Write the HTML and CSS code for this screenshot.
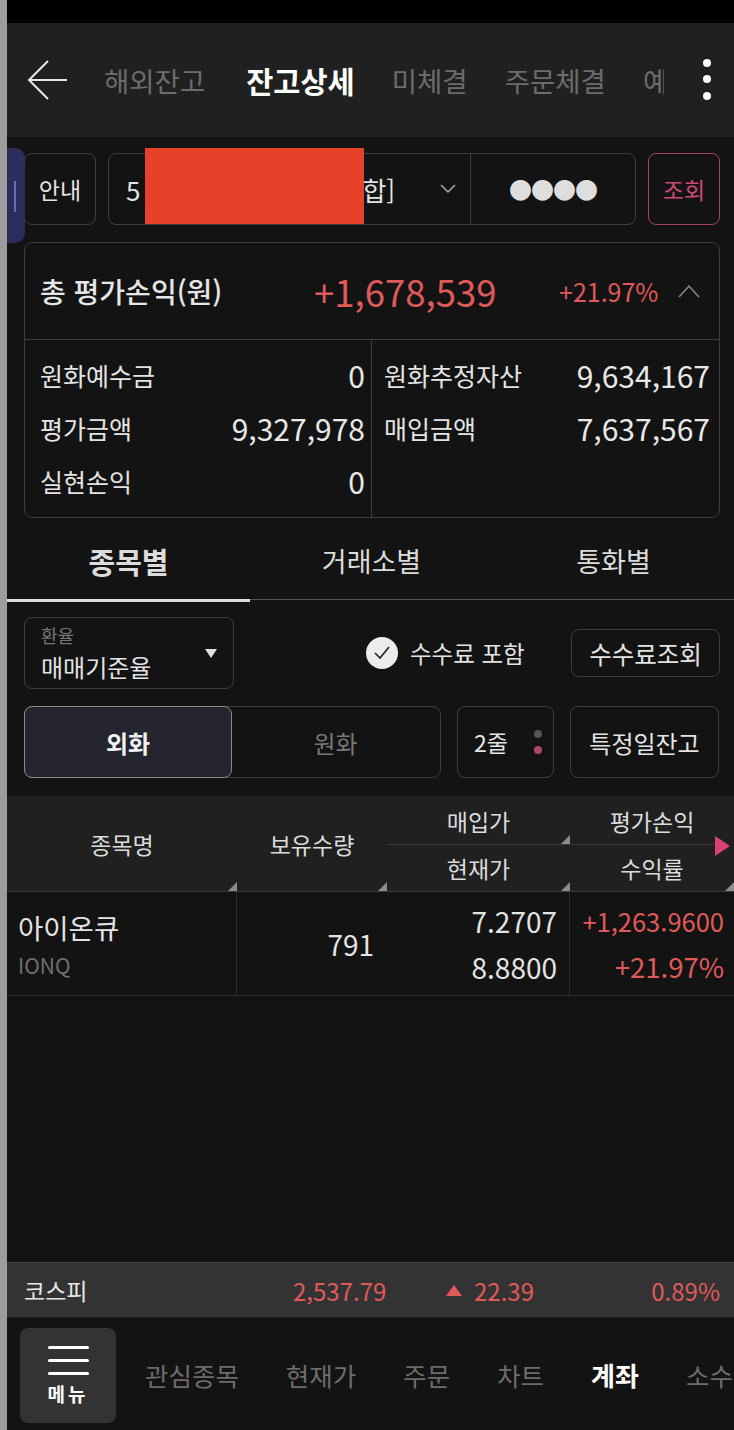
FILE: index.html
```html
<!DOCTYPE html>
<html lang="ko">
<head>
  <meta charset="UTF-8" />
  <title>잔고상세</title>
  <link rel="stylesheet" href="styles.css">
</head>
<body>
  <div class="app">
    <div class="status"></div>
    <header class="topbar">
      <svg class="back" width="42" height="42" viewBox="0 0 42 42">
        <path d="M40 21 H2 M21 2 L2 21 L21 40" fill="none" stroke="#e8e8e8" stroke-width="2"/>
      </svg>
      <nav class="top-tabs">
        <span>해외잔고</span>
        <span class="on">잔고상세</span>
        <span>미체결</span>
        <span>주문체결</span>
        <span>예약주문</span>
      </nav>
      <svg class="kebab" width="10" height="44" viewBox="0 0 10 44">
        <circle cx="5" cy="5" r="4" fill="#fff"/>
        <circle cx="5" cy="21" r="4" fill="#fff"/>
        <circle cx="5" cy="38" r="4" fill="#fff"/>
      </svg>
    </header>

    <main class="content">
      <div class="side-tab"><i></i></div>

      <div class="account-row">
        <button class="box-btn guide">안내</button>
        <div class="account">
          <div class="acct-no">
            <span>5</span>
            <span class="acct-type">합]</span>
            <svg class="chev" width="16" height="10" viewBox="0 0 16 10">
              <path d="M1 1 L8 8 L15 1" fill="none" stroke="#aaa" stroke-width="1.5"/>
            </svg>
            <div class="redact"></div>
          </div>
          <div class="acct-pw">●●●●</div>
        </div>
        <button class="box-btn query">조회</button>
      </div>

      <section class="summary">
        <div class="summary-head">
          <span class="sum-title">총 평가손익(원)</span>
          <span class="sum-total">+1,678,539</span>
          <span class="sum-rate">+21.97%</span>
          <svg class="caret" width="22" height="14" viewBox="0 0 22 14">
            <path d="M1 13 L11 2 L21 13" fill="none" stroke="#8a8a8a" stroke-width="1.5"/>
          </svg>
        </div>
        <div class="summary-grid">
          <div class="sum-col">
            <div class="sum-row"><span>원화예수금</span><b>0</b></div>
            <div class="sum-row"><span>평가금액</span><b>9,327,978</b></div>
            <div class="sum-row"><span>실현손익</span><b>0</b></div>
          </div>
          <div class="sum-col right">
            <div class="sum-row"><span>원화추정자산</span><b>9,634,167</b></div>
            <div class="sum-row"><span>매입금액</span><b>7,637,567</b></div>
          </div>
        </div>
      </section>

      <div class="tabs">
        <span class="on">종목별</span>
        <span>거래소별</span>
        <span>통화별</span>
      </div>

      <div class="ctrl-row">
        <div class="rate-select">
          <small>환율</small>
          <span>매매기준율</span>
          <i class="tri"></i>
        </div>
        <label class="fee-check">
          <svg width="34" height="34" viewBox="0 0 34 34">
            <circle cx="17" cy="17" r="16" fill="#ececec"/>
            <path d="M10 17 L15 22 L24 11" fill="none" stroke="#222" stroke-width="1.6"/>
          </svg>
          수수료 포함
        </label>
        <button class="box-btn fee-btn">수수료조회</button>
      </div>

      <div class="ctrl-row second">
        <div class="segment">
          <span class="on">외화</span>
          <span>원화</span>
        </div>
        <div class="lines-btn">
          2줄
          <span class="dots"><i></i><i class="pink"></i></span>
        </div>
        <button class="box-btn date-btn">특정일잔고</button>
      </div>

      <div class="table">
        <div class="thead">
          <div class="th c1">종목명<i class="corner"></i></div>
          <div class="th c2">보유수량<i class="corner"></i></div>
          <div class="th c3 split">
            <div class="half">매입가<i class="corner"></i></div>
            <div class="half">현재가<i class="corner"></i></div>
          </div>
          <div class="th c4 split">
            <div class="half">평가손익</div>
            <div class="half">수익률<i class="corner"></i></div>
          </div>
          <i class="more-arrow"></i>
        </div>
        <div class="trow">
          <div class="td c1">
            <span class="name">아이온큐</span>
            <span class="code">IONQ</span>
          </div>
          <div class="td c2">791</div>
          <div class="td c3">
            <span>7.2707</span>
            <span>8.8800</span>
          </div>
          <div class="td c4">
            <span class="pl">+1,263.9600</span>
            <span class="rt">+21.97%</span>
          </div>
        </div>
      </div>
    </main>

    <div class="ticker">
      <span class="t-name">코스피</span>
      <span class="t-price">2,537.79</span>
      <span class="t-diff"><i class="up"></i>22.39</span>
      <span class="t-rate">0.89%</span>
    </div>

    <footer class="bottom-nav">
      <div class="menu-btn">
        <span class="bars"><i></i><i></i><i></i></span>
        <b>메뉴</b>
      </div>
      <nav class="nav-items">
        <span>관심종목</span>
        <span>현재가</span>
        <span>주문</span>
        <span>차트</span>
        <span class="on">계좌</span>
        <span>소수점</span>
      </nav>
    </footer>
  </div>
</body>
</html>
```

FILE: styles.css
```css
* {
  box-sizing: border-box;
}
body {
  margin: 0;
  background: #131313;
  font-family: "Noto Sans CJK KR", "Noto Sans", sans-serif;
  color: #e4e4e4;
}
button {
  font-family: inherit;
}
.app {
  width: 734px;
  height: 1430px;
  border-left: 7px solid #9d9d9d;
  display: flex;
  flex-direction: column;
  overflow: hidden;
  background: #131313;
}
.status {
  height: 23px;
  background: #000;
  flex: none;
}
.topbar {
  height: 114px;
  flex: none;
  background: #202020;
  display: flex;
  align-items: center;
  padding-left: 20px;
}
.back {
  flex: none;
}
.top-tabs {
  display: flex;
  gap: 37px;
  margin-left: 35px;
  width: 560px;
  overflow: hidden;
  white-space: nowrap;
  align-items: center;
  font-size: 27.5px;
  color: #6c6c6c;
}
.top-tabs .on {
  color: #fff;
  font-weight: 700;
  font-size: 29.5px;
  margin-left: 4px;
}
.kebab {
  margin-left: auto;
  margin-right: 22px;
}

.content {
  position: relative;
  padding: 16px 14px 0 17px;
  flex: 1;
}
.side-tab {
  position: absolute;
  left: 0;
  top: 11px;
  width: 18px;
  height: 95px;
  background: #2d2d5c;
  border-radius: 0 10px 10px 0;
}
.side-tab i {
  position: absolute;
  left: 7px;
  top: 33px;
  width: 2px;
  height: 31px;
  background: #6a6ab4;
}

.box-btn {
  background: #131313;
  border: 1px solid #3e3e3e;
  border-radius: 8px;
  color: #e4e4e4;
  font-size: 23px;
  padding: 0;
}
.account-row {
  display: flex;
  height: 72px;
  gap: 12px;
}
.guide {
  width: 72px;
}
.account {
  width: 528px;
  display: flex;
  border: 1px solid #3e3e3e;
  border-radius: 8px;
}
.acct-no {
  position: relative;
  width: 362px;
  border-right: 1px solid #3e3e3e;
  display: flex;
  align-items: center;
  padding-left: 17px;
  font-size: 26px;
}
.acct-type {
  margin-left: 222px;
}
.chev {
  margin-left: auto;
  margin-right: 14px;
}
.redact {
  position: absolute;
  left: 36px;
  top: -6px;
  width: 219px;
  height: 76px;
  background: #e8412a;
}
.acct-pw {
  flex: 1;
  display: flex;
  align-items: center;
  justify-content: center;
  font-size: 23px;
  letter-spacing: -1px;
  color: #dedede;
}
.query {
  width: 72px;
  border-color: #a8406a;
  color: #cc4a7a;
}

.summary {
  margin-top: 17px;
  border: 1px solid #3e3e3e;
  border-radius: 8px;
  height: 276px;
}
.summary-head {
  height: 97px;
  border-bottom: 1px solid #3e3e3e;
  display: flex;
  align-items: center;
  padding-left: 15px;
}
.sum-title {
  font-size: 28px;
  font-weight: 500;
  color: #e6e6e6;
  width: 274px;
}
.sum-total {
  font-size: 36.5px;
  color: #e05a5a;
  width: 245px;
}
.sum-rate {
  font-size: 25px;
  color: #e05a5a;
}
.caret {
  margin-left: auto;
  margin-right: 19px;
}
.summary-grid {
  display: grid;
  grid-template-columns: 347px 1fr;
  height: 177px;
}
.sum-col {
  padding: 8px 6px 0 15px;
  border-right: 1px solid #3e3e3e;
}
.sum-col.right {
  border-right: none;
  padding: 8px 9px 0 12px;
}
.sum-row {
  height: 53px;
  display: flex;
  align-items: center;
  justify-content: space-between;
  font-size: 25px;
}
.sum-row b {
  font-weight: 400;
  font-size: 30px;
  color: #e8e8e8;
}

.tabs {
  margin: 2px -14px 0 -17px;
  height: 80px;
  display: grid;
  grid-template-columns: 243px 243px 1fr;
  align-items: center;
  text-align: center;
  font-size: 27px;
  color: #dcdcdc;
  border-bottom: 1px solid #555;
  position: relative;
}
.tabs .on {
  font-weight: 700;
  font-size: 29px;
  height: 100%;
  line-height: 80px;
  border-bottom: 3px solid #dcdcdc;
  margin-bottom: -2px;
}

.ctrl-row {
  display: flex;
  align-items: center;
  margin-top: 17px;
  height: 72px;
}
.rate-select {
  position: relative;
  width: 210px;
  height: 72px;
  border: 1px solid #3e3e3e;
  border-radius: 8px;
  padding: 4px 0 0 16px;
  display: flex;
  flex-direction: column;
}
.rate-select small {
  font-size: 18px;
  color: #777;
  line-height: 27px;
}
.rate-select span {
  font-size: 24px;
  line-height: 36px;
}
.rate-select .tri {
  position: absolute;
  right: 16px;
  top: 31px;
  border-left: 6px solid transparent;
  border-right: 6px solid transparent;
  border-top: 9px solid #e0e0e0;
}
.fee-check {
  display: flex;
  align-items: center;
  gap: 11px;
  margin-left: 131px;
  font-size: 23.5px;
}
.fee-btn {
  margin-left: auto;
  width: 149px;
  height: 48px;
  font-size: 24.5px;
}
.ctrl-row.second {
  gap: 16px;
}
.segment {
  width: 417px;
  height: 72px;
  display: flex;
  border: 1px solid #3e3e3e;
  border-radius: 8px;
  font-size: 24px;
  color: #777;
}
.segment span {
  flex: 1;
  display: flex;
  align-items: center;
  justify-content: center;
}
.segment .on {
  flex: none;
  width: 208px;
  margin: -1px;
  background: #25252f;
  border: 1px solid #8a8a8a;
  border-radius: 8px;
  color: #f0f0f0;
  font-weight: 700;
}
.lines-btn {
  width: 97px;
  height: 72px;
  border: 1px solid #3e3e3e;
  border-radius: 8px;
  display: flex;
  align-items: center;
  padding-left: 16px;
  font-size: 23px;
}
.dots {
  margin-left: auto;
  margin-right: 11px;
  display: flex;
  flex-direction: column;
  gap: 8px;
}
.dots i {
  width: 8px;
  height: 8px;
  border-radius: 50%;
  background: #555;
}
.dots i.pink {
  background: #b04468;
}
.date-btn {
  width: 149px;
  height: 72px;
  font-size: 24px;
}

.table {
  margin: 18px -14px 0 -17px;
}
.thead,
.trow {
  display: grid;
  grid-template-columns: 230px 150px 183px 164px;
  position: relative;
}
.thead {
  height: 96px;
  background: #202020;
  border-bottom: 1px solid #3a3a3a;
  font-size: 23px;
  color: #dcdcdc;
}
.th {
  position: relative;
  display: flex;
  align-items: center;
  justify-content: center;
}
.th.split {
  flex-direction: column;
  align-items: stretch;
}
.half {
  position: relative;
  flex: 1;
  display: flex;
  align-items: center;
  justify-content: center;
}
.half:first-child {
  border-bottom: 1px solid #3a3a3a;
  padding-top: 2px;
}
.c4 .half:first-child {
  margin-right: 14px;
  padding-left: 14px;
}
.corner {
  position: absolute;
  right: 0;
  bottom: 0;
  border-left: 9px solid transparent;
  border-bottom: 9px solid #8c8c8c;
}
.more-arrow {
  position: absolute;
  right: 4px;
  top: 40px;
  border-top: 10px solid transparent;
  border-bottom: 10px solid transparent;
  border-left: 15px solid #d8407a;
}
.trow {
  height: 104px;
  border-bottom: 1px solid #2e2e2e;
}
.td {
  display: flex;
  flex-direction: column;
  justify-content: center;
  border-right: 1px solid #2e2e2e;
}
.td.c1 {
  padding-left: 11px;
  gap: 6px;
}
.td.c1 .name {
  font-size: 27.5px;
  line-height: 36px;
}
.td.c1 .code {
  font-size: 21px;
  color: #707070;
  line-height: 28px;
}
.td.c2 {
  align-items: flex-end;
  padding-right: 13px;
  border-right: none;
  font-size: 28px;
}
.td.c3 {
  align-items: flex-end;
  padding-right: 12px;
  font-size: 28px;
  gap: 8px;
  line-height: 38px;
}
.td.c4 {
  align-items: flex-end;
  border-right: none;
  padding-right: 10px;
  color: #e05a5a;
  gap: 8px;
}
.td.c4 .pl {
  font-size: 25.5px;
  line-height: 36px;
}
.td.c4 .rt {
  font-size: 27.5px;
  line-height: 38px;
}

.ticker {
  flex: none;
  height: 56px;
  background: #333;
  border-top: 1px solid #444;
  border-bottom: 1px solid #1e1e1e;
  display: flex;
  align-items: center;
  padding: 0 14px 0 17px;
  font-size: 24px;
  color: #e05a5a;
}
.t-name {
  color: #e6e6e6;
  width: 269px;
  font-size: 23px;
}
.t-price {
  width: 153px;
}
.t-diff {
  display: flex;
  align-items: center;
  gap: 12px;
}
.up {
  border-left: 8px solid transparent;
  border-right: 8px solid transparent;
  border-bottom: 11px solid #e05a5a;
}
.t-rate {
  margin-left: auto;
}

.bottom-nav {
  flex: none;
  height: 112px;
  display: flex;
  align-items: center;
  padding-left: 13px;
}
.menu-btn {
  flex: none;
  width: 96px;
  height: 95px;
  margin-top: 2px;
  background: #333;
  border-radius: 8px;
  display: flex;
  flex-direction: column;
  align-items: center;
  justify-content: center;
  gap: 8px;
}
.bars {
  display: flex;
  flex-direction: column;
  gap: 10px;
}
.bars i {
  width: 41px;
  height: 3px;
  background: #fff;
  border-radius: 2px;
}
.menu-btn b {
  font-size: 19px;
  letter-spacing: 3px;
  color: #fff;
  line-height: 22px;
}
.nav-items {
  display: flex;
  gap: 47px;
  margin-left: 29px;
  white-space: nowrap;
  font-size: 25.5px;
  color: #6c6c6c;
}
.nav-items .on {
  color: #fff;
  font-weight: 700;
  font-size: 26px;
}
```
